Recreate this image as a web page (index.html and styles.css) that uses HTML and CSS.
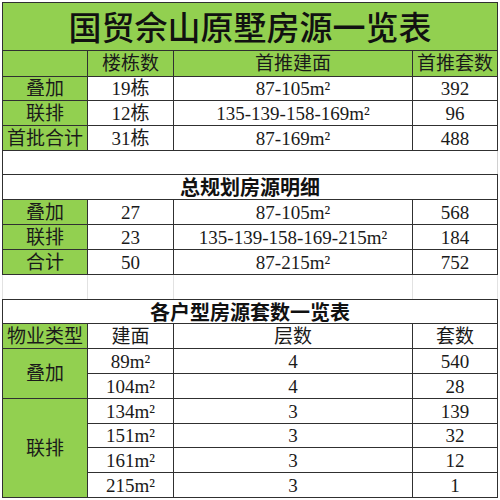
FILE: index.html
```html
<!DOCTYPE html>
<html lang="zh-CN">
<head>
<meta charset="utf-8">
<title>国贸佘山原墅房源一览表</title>
<link rel="stylesheet" href="styles.css">
</head>
<body>
<table class="sheet">
  <colgroup>
    <col class="c1"><col class="c2"><col class="c3"><col class="c4">
  </colgroup>
  <tbody>
    <tr class="r-title"><td colspan="4" class="green title">国贸佘山原墅房源一览表</td></tr>
    <tr class="h26 green"><td></td><td>楼栋数</td><td>首推建面</td><td>首推套数</td></tr>
    <tr class="h24"><td class="green">叠加</td><td>19栋</td><td>87-105m²</td><td>392</td></tr>
    <tr class="h25"><td class="green">联排</td><td>12栋</td><td>135-139-158-169m²</td><td>96</td></tr>
    <tr class="h25"><td class="green">首批合计</td><td>31栋</td><td>87-169m²</td><td>488</td></tr>
    <tr class="h24 gap1"><td colspan="4"></td></tr>
    <tr class="h25"><td colspan="4" class="sub">总规划房源明细</td></tr>
    <tr class="h25"><td class="green">叠加</td><td>27</td><td>87-105m²</td><td>568</td></tr>
    <tr class="h25"><td class="green">联排</td><td>23</td><td>135-139-158-169-215m²</td><td>184</td></tr>
    <tr class="h25"><td class="green">合计</td><td>50</td><td>87-215m²</td><td>752</td></tr>
    <tr class="h25 gap2"><td></td><td></td><td></td><td></td></tr>
    <tr class="h24"><td colspan="4" class="sub">各户型房源套数一览表</td></tr>
    <tr class="h25"><td class="green">物业类型</td><td>建面</td><td>层数</td><td>套数</td></tr>
    <tr class="h25"><td class="green" rowspan="2">叠加</td><td>89m²</td><td>4</td><td>540</td></tr>
    <tr class="h25"><td>104m²</td><td>4</td><td>28</td></tr>
    <tr class="h25"><td class="green" rowspan="4">联排</td><td>134m²</td><td>3</td><td>139</td></tr>
    <tr class="h24"><td>151m²</td><td>3</td><td>32</td></tr>
    <tr class="h25"><td>161m²</td><td>3</td><td>12</td></tr>
    <tr class="h25"><td>215m²</td><td>3</td><td>1</td></tr>
  </tbody>
</table>
</body>
</html>
```

FILE: styles.css
```css
html, body {
  margin: 0;
  padding: 0;
  background: #ffffff;
}

.sheet {
  margin: 2px 0 0 2px;
  border-collapse: collapse;
  table-layout: fixed;
  width: 495px;
  font-family: "Liberation Serif", "Noto Sans CJK SC", serif;
  font-size: 19px;
  color: #1a1a1a;
}

.c1 { width: 85px; }
.c2 { width: 86px; }
.c3 { width: 239px; }
.c4 { width: 85px; }

.sheet td {
  border: 1px solid #303030;
  padding: 0;
  text-align: center;
  vertical-align: middle;
  line-height: 1;
  white-space: nowrap;
}

.green,
.sheet td.green {
  background: #92d050;
}

.r-title { height: 48px; }
.h26 { height: 26px; }
.h25 { height: 25px; }
.h24 { height: 24px; }

.title {
  font-family: "Noto Sans CJK SC", serif;
  font-size: 33px;
  font-weight: 500;
  color: #111111;
}

.sub {
  font-family: "Noto Sans CJK SC", serif;
  font-size: 20px;
  font-weight: 700;
  color: #111111;
}

.sheet .gap1 td {
  border-top: 1px solid #303030;
  border-bottom: 1px solid #303030;
  border-right-color: #d0d0d0;
}

.sheet .gap2 td {
  border-left-color: #e2e2e2;
  border-right-color: #e2e2e2;
}
```
